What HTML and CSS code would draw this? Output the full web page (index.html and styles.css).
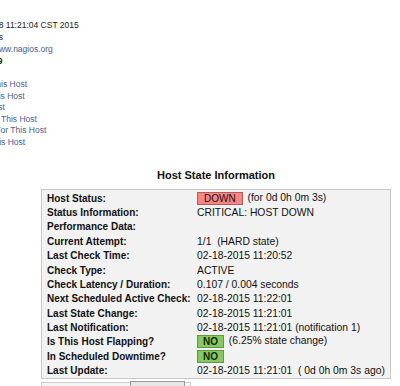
FILE: index.html
```html
<!DOCTYPE html>
<html>
<head>
<meta charset="utf-8">
<title>Host State Information</title>
<link rel="stylesheet" href="styles.css">
</head>
<body>
<div class="side">
  <div class="info">
    <div>Last Updated: Wed Feb 18 11:21:04 CST 2015</div>
    <div>Updated every 90 seconds</div>
    <div>Nagios&reg; Core&trade; 4.0.8 - <a href="#">www.nagios.org</a></div>
    <div class="b copy">Copyright 2009</div>
  </div>
  <div class="links">
    <a href="#">View Status Detail For This Host</a>
    <a href="#">View Alert History For This Host</a>
    <a href="#">View Trends For This Host</a>
    <a href="#">View Alert Histogram For This Host</a>
    <a href="#">View Availability Report For This Host</a>
    <a href="#">View Notifications For This Host</a>
  </div>
</div>
<section class="state">
  <h2 class="title">Host State Information</h2>
  <div class="box">
    <div class="grid">
      <div class="lbl">Host Status:</div>
      <div class="val"><span class="badge down">DOWN</span> (for 0d 0h 0m 3s)</div>
      <div class="lbl">Status Information:</div>
      <div class="val">CRITICAL: HOST DOWN</div>
      <div class="lbl">Performance Data:</div>
      <div class="val"></div>
      <div class="lbl">Current Attempt:</div>
      <div class="val">1/1&nbsp; (HARD state)</div>
      <div class="lbl">Last Check Time:</div>
      <div class="val">02-18-2015 11:20:52</div>
      <div class="lbl">Check Type:</div>
      <div class="val">ACTIVE</div>
      <div class="lbl">Check Latency / Duration:</div>
      <div class="val">0.107&nbsp;/&nbsp;0.004 seconds</div>
      <div class="lbl">Next Scheduled Active Check:</div>
      <div class="val">02-18-2015 11:22:01</div>
      <div class="lbl">Last State Change:</div>
      <div class="val">02-18-2015 11:21:01</div>
      <div class="lbl">Last Notification:</div>
      <div class="val">02-18-2015 11:21:01 (notification 1)</div>
      <div class="lbl">Is This Host Flapping?</div>
      <div class="val"><span class="badge ok">NO</span> (6.25% state change)</div>
      <div class="lbl">In Scheduled Downtime?</div>
      <div class="val"><span class="badge ok">NO</span></div>
      <div class="lbl">Last Update:</div>
      <div class="val">02-18-2015 11:21:01&nbsp; ( 0d 0h 0m 3s ago)</div>
    </div>
  </div>
  <div class="box2"><span class="btn"></span></div>
</section>
</body>
</html>
```
FILE: styles.css
```css
* { box-sizing: border-box; }
html, body { margin: 0; padding: 0; }
body {
  font-family: "Liberation Sans", Arial, sans-serif;
  color: #111;
  background: #fff;
  overflow: hidden;
  height: 386px;
}
a { color: #4b5c94; text-decoration: none; }

.side { font-size: 8.5px; white-space: nowrap; }
.info { margin-left: -98px; padding-top: 19px; line-height: 12px; color: #222; }
.b { font-weight: bold; }
.copy { margin-left: 39px; }
.links { margin-left: -95px; margin-top: 12px; line-height: 11.6px; }
.links a { display: block; }

.state { margin-left: 41px; width: 350px; }
.title {
  margin: 20.5px 0 0;
  font-size: 11px;
  line-height: 13px;
  font-weight: bold;
  text-align: center;
  color: #111;
}
.box {
  margin-top: 6.5px;
  border: 1px solid #c8c8c8;
  background: #f2f2f2;
  padding: 1.5px 0 0.5px 5px;
  font-size: 10px;
}
.grid {
  display: grid;
  grid-template-columns: 150px 1fr;
  grid-auto-rows: 14.36px;
  align-items: center;
  white-space: nowrap;
}
.lbl { font-weight: bold; color: #111; }
.val { color: #111; font-size: 10.35px; }
.badge {
  display: inline-block;
  font-size: 10px;
  line-height: 11px;
  border: 1px solid;
  vertical-align: middle;
  margin-right: 2px;
}
.down { background: #f48686; border-color: #b85a5a; padding: 0 6px; color: #2a0a0a; }
.ok { background: #88c862; border-color: #5e9a40; padding: 0 5px; font-weight: bold; color: #0f2a06; }

.box2 {
  margin-top: 3px;
  width: 150px;
  height: 12px;
  border: 1px solid #cfcfcf;
  background: #f4f4f4;
  padding-left: 88px;
}
.btn {
  display: block;
  width: 55px;
  height: 6px;
  border: 1px solid #9a9a9a;
  border-bottom: none;
  background: #e6e6e6;
  margin-top: -2px;
}
```
